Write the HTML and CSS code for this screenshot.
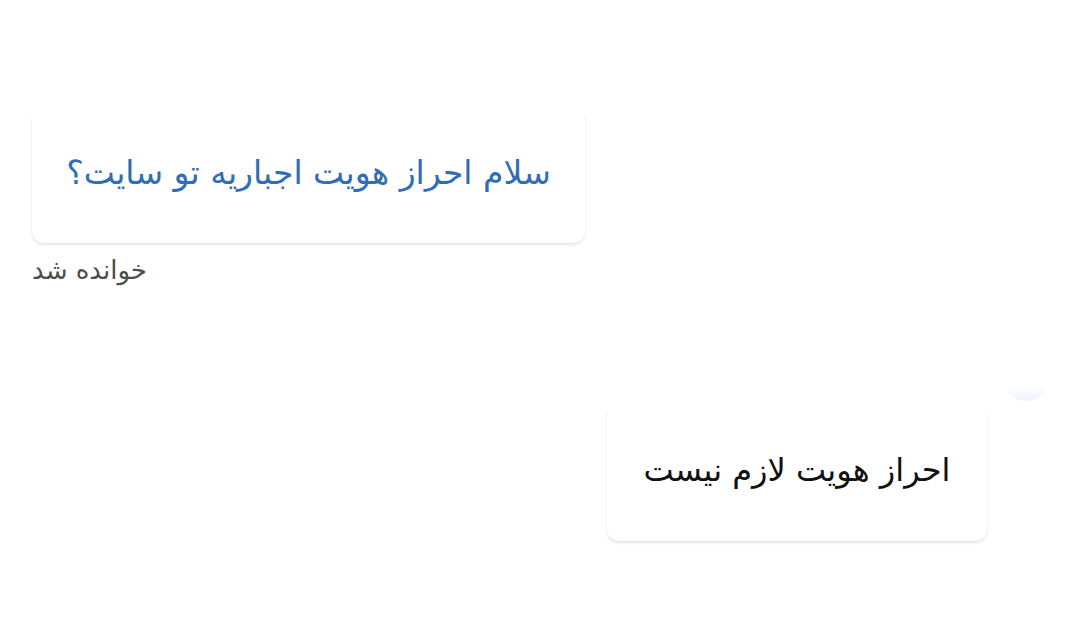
FILE: index.html
```html
<!DOCTYPE html>
<html lang="fa" dir="rtl">
<head>
<meta charset="utf-8">
<link rel="stylesheet" href="styles.css">
</head>
<body>
<main class="chat">
  <section class="msg msg-out">
    <div class="bubble bubble-out">سلام احراز هویت اجباریه تو سایت؟</div>
    <div class="status">خوانده شد</div>
  </section>
  <section class="msg msg-in">
    <span class="avatar"></span>
    <div class="bubble bubble-in">احراز هویت لازم نیست</div>
  </section>
</main>
</body>
</html>
```
FILE: styles.css
```css
html, body {
  margin: 0;
  padding: 0;
  background: #ffffff;
}
body {
  width: 1080px;
  height: 620px;
  overflow: hidden;
  font-family: "DejaVu Sans", "Noto Sans", sans-serif;
}
.chat {
  display: flex;
  flex-direction: column;
  padding: 108px 0 0 0;
}
.msg {
  display: flex;
  flex-direction: column;
}
.msg-out {
  align-items: flex-end;
  padding-left: 32px;
  direction: ltr;
}
.msg-out .bubble, .msg-out .status { direction: rtl; }
.bubble {
  background: #fff;
  border-radius: 12px;
  box-shadow: 0 2px 3px rgba(0,0,0,0.10), 0 0 1px rgba(0,0,0,0.04);
  display: flex;
  align-items: center;
  box-sizing: border-box;
}
.bubble-out {
  align-self: flex-start;
  width: 553px;
  height: 135px;
  justify-content: center;
  color: #2f6db5;
  font-size: 33px;
  padding-bottom: 6px;
}
.status {
  align-self: flex-start;
  margin-top: 10px;
  font-size: 26px;
  line-height: 34px;
  color: #4a4f4a;
}
.msg-in {
  position: relative;
  margin-top: 118px;
  align-items: flex-start;
  padding-right: 93px;
}
.bubble-in {
  width: 380px;
  height: 136px;
  justify-content: center;
  color: #111;
  font-size: 32px;
  padding-bottom: 6px;
}
.avatar {
  position: absolute;
  right: 32px;
  top: -48px;
  width: 44px;
  height: 44px;
  border-radius: 50%;
  background: linear-gradient(#ffffff 65%, #eef3f9 100%);
}
```
